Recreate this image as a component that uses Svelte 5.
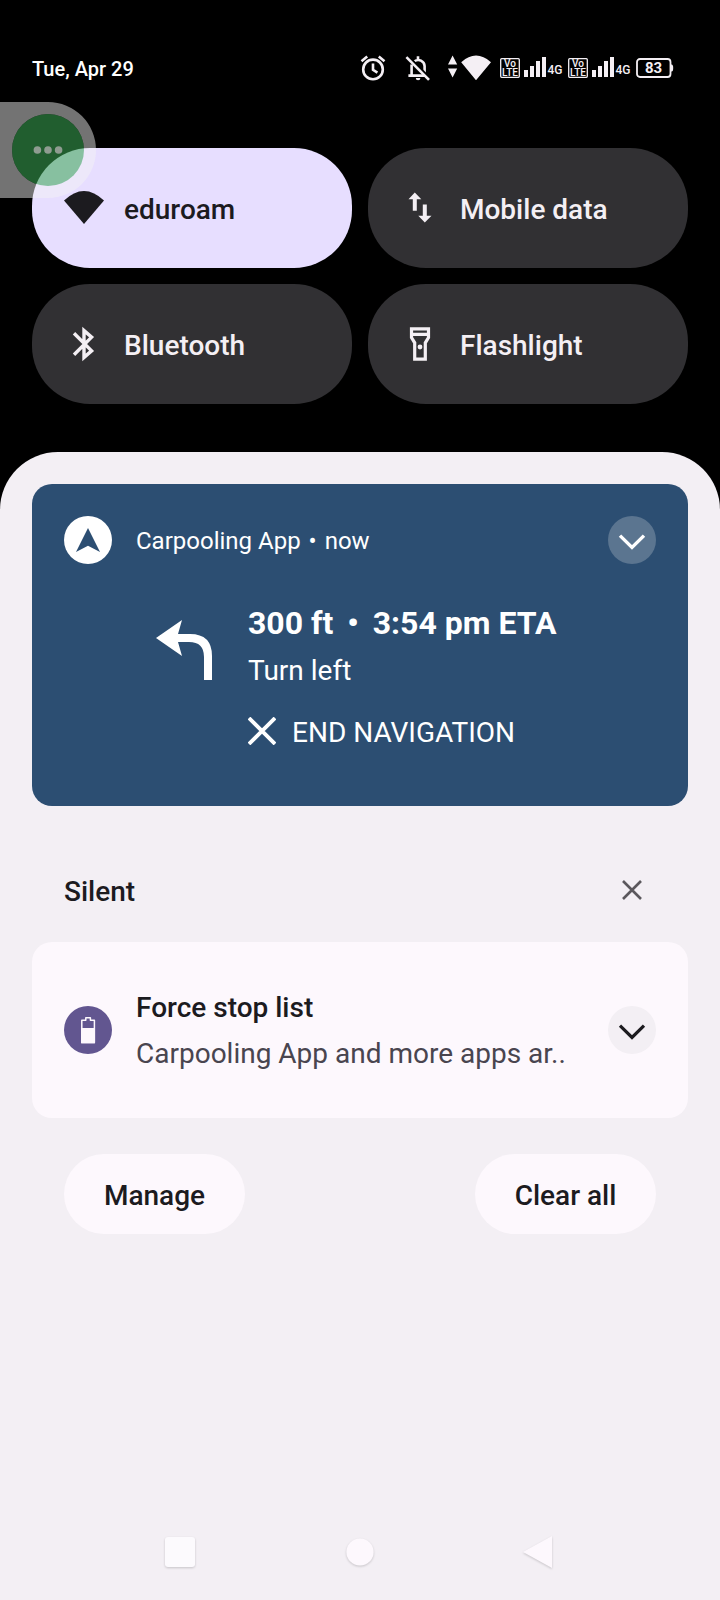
<script>
  const signals = ['SIM 1', 'SIM 2'];
  const tiles = [
    { label: 'eduroam', icon: 'wifi', active: true },
    { label: 'Mobile data', icon: 'data', active: false },
    { label: 'Bluetooth', icon: 'bluetooth', active: false },
    { label: 'Flashlight', icon: 'flashlight', active: false }
  ];
</script>

<main class="screen">
  <header class="status">
    <time class="date">Tue, Apr 29</time>
    <div class="indicators">
      <svg class="alarm" width="26" height="26" viewBox="0 0 26 26" aria-hidden="true">
        <g fill="none" stroke="#f4eff4" stroke-width="2.6">
          <circle cx="13" cy="14.4" r="9.8" />
          <path d="M13 8.6v6.2l4.4 2.8M1.5 6.2 7.2 1.6M24.5 6.2 18.8 1.6" />
        </g>
      </svg>
      <svg class="bell" width="26" height="26" viewBox="0 0 26 26" aria-hidden="true">
        <path d="M13 1.2v3.4M9.5 6.2A6.4 6.4 0 0 1 19.6 11v9M6.6 9.6V20M3.4 20.6h17" fill="none" stroke="#f4eff4" stroke-width="2.6" />
        <path d="M10.8 23h4.6a2.3 2.3 0 0 1-4.6 0z" fill="#f4eff4" />
        <path d="M3.2 1.4 25.4 23.6" stroke="#000" stroke-width="2.4" />
        <path d="M1.4 2.2 24 24.8" stroke="#f4eff4" stroke-width="2.6" />
      </svg>
      <svg class="wifi" width="44" height="26" viewBox="0 0 44 26" aria-hidden="true">
        <path d="M0 9.6 4.6 0.6l4.6 9zM0 13.4h9.2l-4.6 9zM13.2 7.2Q28 -6 43 7.2L28 25.2z" fill="#f4eff4" />
      </svg>
      {#each signals as sim}
        <svg class="signal" width="64" height="22" viewBox="0 0 64 22" role="img" aria-label={sim}>
          <rect x="0.7" y="1.7" width="18.6" height="18.6" rx="1" fill="none" stroke="#f4eff4" stroke-width="1.3" />
          <g fill="#f4eff4" text-anchor="middle">
            <text class="volte" x="10" y="10">Vo</text>
            <text class="volte" x="10" y="19">LTE</text>
            <path d="M24 13h4v7h-4zM30 9h4v11h-4zM36 4h4v16h-4zM42 0h4v20h-4z" />
            <text class="net" x="55" y="17">4G</text>
          </g>
        </svg>
      {/each}
      <svg class="battery" width="38" height="22" viewBox="0 0 38 22" role="img" aria-label="Battery">
        <rect x="1" y="2" width="33.5" height="18" rx="3" fill="none" stroke="#f4eff4" stroke-width="1.8" />
        <path d="M35 7.5h.6q1.6 0 1.6 3.5t-1.6 3.5H35z" fill="#f4eff4" />
        <text class="charge" x="17.6" y="16" text-anchor="middle">83</text>
      </svg>
    </div>
  </header>

  <section class="tiles" aria-label="Quick settings">
    {#each tiles as tile}
      <button class="tile" class:active={tile.active} aria-pressed={tile.active}>
        <svg width="40" height="40" viewBox="0 0 40 40" aria-hidden="true">
          {#if tile.icon === 'wifi'}
            <path d="M0 12.5Q20 -6.5 40 12.5L20 36z" fill="currentColor" />
          {:else if tile.icon === 'data'}
            <path d="M14.8 4.5 21.3 11.3h-4.5v11.5h-4V11.3H8.5zM24.8 34.5 18.3 27.8h4.5V16.5h4v11.3h4.7z" fill="currentColor" />
          {:else if tile.icon === 'bluetooth'}
            <path d="M10 9.2 27.6 26.8 20 33.4V6.6l7.6 6.6L10 30.8" fill="none" stroke="currentColor" stroke-width="3.4" />
          {:else}
            <path d="M11.5 4.8h17v8.8l-3.2 5.2v16.4H14.7V18.8l-3.2-5.2zM11.5 10.4h17" fill="none" stroke="currentColor" stroke-width="3.2" />
            <circle cx="20" cy="23" r="2.4" fill="currentColor" />
          {/if}
        </svg>
        <span>{tile.label}</span>
      </button>
    {/each}
  </section>

  <section class="shade">
    <article class="card navigation">
      <div class="card-head">
        <svg width="48" height="48" viewBox="0 0 48 48" aria-hidden="true">
          <circle cx="24" cy="24" r="24" fill="#fff" />
          <path d="M24 12 36 36 24 29.8 12 36z" fill="#2c4e72" />
        </svg>
        <p class="source">Carpooling App <span class="separator">•</span> now</p>
        <button class="expand" aria-label="Expand Carpooling App">
          <svg width="48" height="48" viewBox="0 0 48 48"><path d="M12 19.6 24 31.4 36 19.6" fill="none" stroke="currentColor" stroke-width="3.4" /></svg>
        </button>
      </div>
      <div class="route">
        <svg class="turn" width="56" height="60" viewBox="0 0 56 60" aria-hidden="true">
          <path d="M0 18 26 0l-4 14h12q22 0 22 22v24h-8V37q0-15-15-15H22l4 14z" fill="#fff" />
        </svg>
        <div class="directions">
          <h2>300 ft <span class="dot">•</span> 3:54 pm ETA</h2>
          <p>Turn left</p>
          <button class="end">
            <svg width="28" height="28" viewBox="0 0 28 28" aria-hidden="true"><path d="M1 1 27 27M27 1 1 27" stroke="currentColor" stroke-width="3.8" /></svg>
            END NAVIGATION
          </button>
        </div>
      </div>
    </article>

    <div class="silent">
      <h2>Silent</h2>
      <button class="dismiss" aria-label="Clear silent notifications">
        <svg width="48" height="48" viewBox="0 0 48 48"><path d="M15 15 33 33M33 15 15 33" stroke="#5b585d" stroke-width="2.6" /></svg>
      </button>
    </div>

    <article class="card battery-card">
      <svg width="48" height="48" viewBox="0 0 48 48" aria-hidden="true">
        <circle cx="24" cy="24" r="24" fill="#625690" />
        <path d="M17.8 36.5V14.2h4v-2.4h4.6v2.4h4v22.3z" fill="none" stroke="#fdf8fd" stroke-width="1.5" stroke-linejoin="round" />
        <path d="M17 22h14v15.3H17z" fill="#fdf8fd" />
      </svg>
      <div class="message">
        <h3>Force stop list</h3>
        <p>Carpooling App and more apps ar..</p>
      </div>
      <button class="expand" aria-label="Expand Force stop list">
        <svg width="48" height="48" viewBox="0 0 48 48"><path d="M12 19.6 24 31.4 36 19.6" fill="none" stroke="currentColor" stroke-width="3.2" /></svg>
      </button>
    </article>

    <div class="actions">
      <button>Manage</button>
      <button>Clear all</button>
    </div>

    <nav class="system">
      <button aria-label="Recent apps">
        <svg width="40" height="40" viewBox="0 0 40 40"><rect x="5" y="5" width="30" height="30" rx="3" fill="#fcfafd" /></svg>
      </button>
      <button aria-label="Home">
        <svg width="40" height="40" viewBox="0 0 40 40"><circle cx="20" cy="20" r="13.6" fill="#fdf8fd" /></svg>
      </button>
      <button aria-label="Back">
        <svg width="40" height="40" viewBox="0 0 40 40"><path d="M3 20 32 4v32z" fill="#fdf8fd" /></svg>
      </button>
    </nav>
  </section>

  <button class="assist" aria-label="Floating menu">
    <svg width="96" height="96" viewBox="0 0 96 96">
      <path d="M0 0h48a48 48 0 0 1 0 96H0zM48 12a36 36 0 0 0 0 72a36 36 0 0 0 0-72z" fill="#f5f5f5" fill-opacity="0.47" fill-rule="evenodd" />
      <circle cx="48" cy="48" r="36" fill="#3ca855" fill-opacity="0.555" />
      <g fill="#8f9c91">
        <circle cx="37.4" cy="48" r="3.8" />
        <circle cx="48" cy="48" r="3.8" />
        <circle cx="58.6" cy="48" r="3.8" />
      </g>
    </svg>
  </button>
</main>

<style>
  :global(body) {
    margin: 0;
    background: #000;
  }

  .screen {
    position: relative;
    display: flex;
    flex-direction: column;
    min-height: 100vh;
    background: #000;
    color: #1c1b1f;
    font-family: Roboto, sans-serif;
    font-size: 28px;
    line-height: 32px;
  }

  h2,
  h3,
  p {
    margin: 0;
    font-size: 28px;
  }

  h2,
  h3 {
    font-weight: 500;
  }

  button {
    margin: 0;
    padding: 0;
    border: 0;
    background: none;
    color: inherit;
    font: inherit;
    cursor: pointer;
  }

  svg {
    display: block;
    flex: none;
  }

  .status {
    display: flex;
    align-items: center;
    justify-content: space-between;
    padding: 52px 46px 64px 32px;
    color: #fff;
  }

  .date {
    padding-top: 2px;
    font-size: 20px;
    font-weight: 500;
    line-height: 30px;
  }

  .indicators {
    display: flex;
    align-items: center;
  }

  .bell {
    margin-left: 19px;
  }

  .wifi {
    margin: 0 8px 0 17px;
  }

  .signal {
    margin-right: 4px;
  }

  .volte {
    font-size: 10px;
    font-weight: 500;
  }

  .net {
    font-size: 12px;
    font-weight: 500;
  }

  .charge {
    fill: #f4eff4;
    font-size: 15px;
    font-weight: 700;
  }

  .tiles {
    display: grid;
    grid-template-columns: 1fr 1fr;
    gap: 16px;
    padding: 0 32px 48px;
  }

  .tile {
    display: flex;
    align-items: center;
    gap: 20px;
    height: 120px;
    padding: 0 32px;
    border-radius: 58px;
    background: #313033;
    color: #f4eff4;
    font-weight: 500;
  }

  .tile.active {
    background: #e7deff;
    color: #1c1b1f;
  }

  .tile span,
  .silent h2 {
    padding-top: 4px;
  }

  .shade {
    display: flex;
    flex: 1;
    flex-direction: column;
    padding: 32px 32px 28px;
    border-radius: 58px 58px 0 0;
    background: #f3eff4;
  }

  .card {
    padding: 32px;
    border-radius: 20px;
  }

  .navigation {
    padding-bottom: 57px;
    background: #2c4e72;
    color: #fff;
  }

  .card-head,
  .battery-card {
    display: flex;
    align-items: center;
    gap: 24px;
  }

  .source {
    flex: 1;
    padding-top: 2px;
    font-size: 24px;
  }

  .separator {
    margin: 0 2px;
  }

  .expand {
    border-radius: 50%;
    background: #5b7590;
  }

  .route {
    display: flex;
    gap: 36px;
    padding: 41px 0 0 92px;
  }

  .turn {
    margin-top: 15px;
  }

  .directions {
    display: flex;
    flex-direction: column;
    align-items: flex-start;
  }

  .directions h2 {
    margin-bottom: 14px;
    font-size: 32px;
    font-weight: 700;
    line-height: 36px;
  }

  .dot {
    margin: 0 6px;
  }

  .end {
    display: flex;
    align-items: flex-start;
    gap: 16px;
    margin-top: 30px;
  }

  .silent {
    display: flex;
    align-items: center;
    justify-content: space-between;
    padding: 60px 32px 28px;
  }

  .battery-card {
    padding: 48px 32px;
    background: #fdf8fd;
  }

  .battery-card .expand {
    background: #f3eff4;
  }

  .message {
    display: flex;
    flex: 1;
    flex-direction: column;
    gap: 14px;
    min-width: 0;
    padding-top: 2px;
  }

  .message p {
    overflow: hidden;
    color: #49454f;
    white-space: nowrap;
  }

  .actions {
    display: flex;
    justify-content: space-between;
    padding: 36px 32px;
  }

  .actions button {
    min-width: 181px;
    height: 80px;
    padding: 4px 36px 0;
    border-radius: 40px;
    background: #fdf8fd;
    font-weight: 500;
  }

  .system {
    display: grid;
    grid-template-columns: repeat(3, 1fr);
    justify-items: center;
    margin-top: auto;
    padding: 0 58px;
  }

  .system svg {
    filter: drop-shadow(0 1px 1px rgb(0 0 0 / 18%));
  }

  .assist {
    position: absolute;
    top: 102px;
    left: 0;
  }
</style>
